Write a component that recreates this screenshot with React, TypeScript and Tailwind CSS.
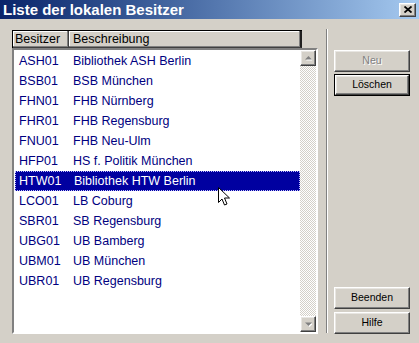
import React from 'react';

const rows: [string, string][] = [
  ['ASH01', 'Bibliothek ASH Berlin'],
  ['BSB01', 'BSB München'],
  ['FHN01', 'FHB Nürnberg'],
  ['FHR01', 'FHB Regensburg'],
  ['FNU01', 'FHB Neu-Ulm'],
  ['HFP01', 'HS f. Politik München'],
  ['HTW01', 'Bibliothek HTW Berlin'],
  ['LCO01', 'LB Coburg'],
  ['SBR01', 'SB Regensburg'],
  ['UBG01', 'UB Bamberg'],
  ['UBM01', 'UB München'],
  ['UBR01', 'UB Regensburg'],
];

const raised =
  'border border-t-white border-l-white border-r-[#404040] border-b-[#404040] shadow-[inset_-1px_-1px_0_#808080,inset_1px_1px_0_#e8e6e2]';

const WinButton: React.FC<{ label: string; disabled?: boolean; isDefault?: boolean }> = ({ label, disabled, isDefault }) => (
  <div className={isDefault ? 'border border-black' : ''}>
    <div
      className={`${raised} bg-[#d4d0c8] flex items-center justify-center text-[10.5px] ${
        isDefault ? 'h-[20px]' : 'h-[22px]'
      } ${disabled ? 'text-[#808080] [text-shadow:1px_1px_0_#fff]' : 'text-black'}`}
    >
      {label}
    </div>
  </div>
);

const ScrollArrow: React.FC<{ up?: boolean }> = ({ up }) => (
  <div className={`${raised} bg-[#d4d0c8] w-[16px] h-[16px] flex items-center justify-center`}>
    <svg width="7" height="5" viewBox="0 0 7 5">
      {up ? (
        <>
          <polygon points="4.5,1 8,4.5 1,4.5" fill="#fff" />
          <polygon points="3.5,0 7,3.5 0,3.5" fill="#808080" />
        </>
      ) : (
        <>
          <polygon points="1,1.5 8,1.5 4.5,5" fill="#fff" />
          <polygon points="0,0.5 7,0.5 3.5,4" fill="#808080" />
        </>
      )}
    </svg>
  </div>
);

export default function App() {
  return (
    <div
      className="w-[419px] h-[343px] bg-[#d4d0c8] flex flex-col overflow-hidden relative"
      style={{ fontFamily: '"Liberation Sans", Arial, sans-serif' }}
    >
      {/* title bar */}
      <div className="h-[19px] flex items-center justify-between bg-gradient-to-r from-[#0a246a] to-[#a6caf0] pl-[3px] pr-[3px]">
        <span className="text-white font-bold text-[15px] leading-none">Liste der lokalen Besitzer</span>
        <div className={`${raised} bg-[#d4d0c8] w-[17px] h-[14px] flex items-center justify-center`}>
          <svg width="8" height="7" viewBox="0 0 8 7">
            <path d="M0.5 0.5 L7.5 6.5 M7.5 0.5 L0.5 6.5" stroke="#000" strokeWidth="1.8" />
          </svg>
        </div>
      </div>

      <div className="flex pt-[11px] pl-[12px]">
        {/* list */}
        <div className="w-[306px] flex flex-col">
          <div className="w-[290px] h-[18px] flex border-t border-l border-black text-[12.5px] text-black">
            <div className="w-[56px] h-full pl-[2px] flex items-center border-r border-b border-r-[#404040] border-b-[#404040] shadow-[inset_-1px_-1px_0_#808080,inset_1px_1px_0_#fff]">
              Besitzer
            </div>
            <div className="flex-1 h-full pl-[4px] flex items-center border-r-2 border-b border-r-[#202020] border-b-[#404040] shadow-[inset_-1px_-1px_0_#808080,inset_1px_1px_0_#fff]">
              Beschreibung
            </div>
          </div>
          <div className="h-[286px] flex border-2 border-t-[#808080] border-l-[#808080] border-r-white border-b-white shadow-[inset_1px_1px_0_#404040]">
            <div className="flex-1 bg-white pt-[1px] pl-[1px] text-[12.5px] text-[#000080]">
              {rows.map(([code, name]) => {
                const sel = code === 'HTW01';
                return (
                  <div
                    key={code}
                    className={`h-[20px] flex items-center ${
                      sel ? 'bg-[#0000a0] text-white border border-dotted border-[#c0c0ff]' : ''
                    }`}
                  >
                    <span className={`w-[58px] ${sel ? 'pl-[3px]' : 'pl-[4px]'}`}>{code}</span>
                    <span>{name}</span>
                  </div>
                );
              })}
            </div>
            <div className="w-[16px] flex flex-col bg-[conic-gradient(#fff_25%,#d4d0c8_0_50%,#fff_0_75%,#d4d0c8_0)] bg-[length:2px_2px]">
              <ScrollArrow up />
              <div className="flex-1" />
              <ScrollArrow />
            </div>
          </div>
        </div>

        {/* separator */}
        <div className="ml-[8px] -mt-px w-[2px] h-[304px] border-l border-l-[#808080] border-r border-r-white" />

        {/* buttons */}
        <div className="ml-[6px] w-[76px] h-[304px] flex flex-col pt-[20px]">
          <WinButton label="Neu" disabled />
          <div className="h-[2px]" />
          <WinButton label="Löschen" isDefault />
          <div className="flex-1" />
          <WinButton label="Beenden" />
          <div className="h-[3px]" />
          <WinButton label="Hilfe" />
        </div>
      </div>

      {/* mouse pointer */}
      <svg className="absolute left-[218px] top-[187px]" width="13" height="20" viewBox="0 0 13 20">
        <path d="M0.5 0.5 L0.5 15.5 L4 12 L6.5 18 L9 17 L6.5 11 L11.5 11 Z" fill="#fff" stroke="#000" strokeWidth="1" />
      </svg>
    </div>
  );
}
